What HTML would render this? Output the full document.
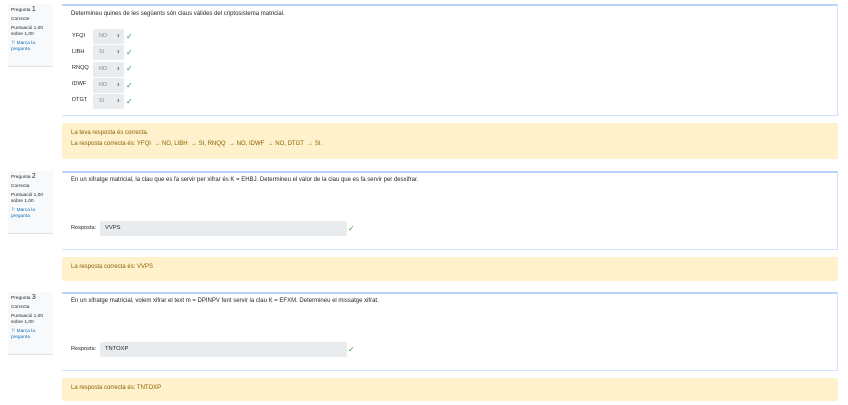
<!DOCTYPE html>
<html><head><style>
*{box-sizing:border-box;margin:0;padding:0}
body{width:848px;height:405px;background:#fff;font-family:"Liberation Sans",sans-serif;color:#1d2125;position:relative;overflow:hidden;font-size:6px}
.a{position:absolute}
.info{position:absolute;left:8px;width:45px;background:#f8f9fa;border-bottom:1px solid #dee2e6;padding:3px 3px;font-size:4.8px;line-height:6px}
.info b{font-weight:normal;font-size:7px}
.info .l{color:#0f6cbf}
.box{position:absolute;left:62px;width:776px;border:1px solid #cfe2ff;border-left:none;border-top:2px solid #b6d4fe}
.fb{position:absolute;left:62px;width:776px;background:#fff1cc;color:#8a6100;border-radius:2px;padding-left:9px}
.sel{position:absolute;left:93px;width:31px;height:15px;background:#e9ecef;border-radius:2px;color:#888;font-size:5.4px;padding:4px 0 0 6px}
.sel:after{content:"⬍";position:absolute;right:4px;top:4px;font-size:4px;color:#666}
.lab{position:absolute;left:72px;font-size:5.6px}
.ck{position:absolute;color:#2f9e44;font-size:8px}
.inp{position:absolute;left:100px;width:247px;height:15px;background:#e9ecef;border-radius:2px;padding:4px 0 0 5px;font-size:5.8px}
</style></head><body>
<div class="info" style="top:4px;height:63px"><div>Pregunta <b>1</b></div><div style="margin-top:3px">Correcte</div><div style="margin-top:3px">Puntuació 1,00 sobre 1,00</div><div class="l" style="margin-top:3px">⚐ Marca la pregunta</div></div>
<div class="box" style="top:4px;height:112px"></div>
<div class="a" style="left:71px;top:11px">Determineu quines de les següents són claus vàlides del criptosistema matricial.</div>
<div class="lab" style="top:33px">YFQI</div><div class="sel" style="top:29px">NO</div><div class="ck" style="left:126px;top:32px">✓</div>
<div class="lab" style="top:49px">LIBH</div><div class="sel" style="top:45px">SI</div><div class="ck" style="left:126px;top:48px">✓</div>
<div class="lab" style="top:65px">RNQQ</div><div class="sel" style="top:62px">NO</div><div class="ck" style="left:126px;top:64px">✓</div>
<div class="lab" style="top:81px">IDWF</div><div class="sel" style="top:78px">NO</div><div class="ck" style="left:126px;top:81px">✓</div>
<div class="lab" style="top:97px">DTGT</div><div class="sel" style="top:94px">SI</div><div class="ck" style="left:126px;top:97px">✓</div>
<div class="fb" style="top:123px;height:36px"><div style="margin-top:7px">La teva resposta és correcta.</div><div style="margin-top:5px">La resposta correcta és: YFQI &nbsp;→ NO, LIBH &nbsp;→ SI, RNQQ &nbsp;→ NO, IDWF &nbsp;→ NO, DTGT &nbsp;→ SI.</div></div>

<div class="info" style="top:171px;height:63px"><div>Pregunta <b>2</b></div><div style="margin-top:3px">Correcta</div><div style="margin-top:3px">Puntuació 1,00 sobre 1,00</div><div class="l" style="margin-top:3px">⚐ Marca la pregunta</div></div>
<div class="box" style="top:171px;height:79px"></div>
<div class="a" style="left:71px;top:177px">En un xifratge matricial, la clau que es fa servir per xifrar és K = EHBJ. Determineu el valor de la clau que es fa servir per desxifrar.</div>
<div class="lab" style="top:225px;left:71px">Resposta:</div><div class="inp" style="top:221px">VVPS</div><div class="ck" style="left:348px;top:224px">✓</div>
<div class="fb" style="top:257px;height:24px"><div style="margin-top:7px">La resposta correcta és: VVPS</div></div>

<div class="info" style="top:292px;height:63px"><div>Pregunta <b>3</b></div><div style="margin-top:3px">Correcta</div><div style="margin-top:3px">Puntuació 1,00 sobre 1,00</div><div class="l" style="margin-top:3px">⚐ Marca la pregunta</div></div>
<div class="box" style="top:292px;height:79px"></div>
<div class="a" style="left:71px;top:298px">En un xifratge matricial, volem xifrar el text m = DPINPV fent servir la clau K = EFXM. Determineu el missatge xifrat.</div>
<div class="lab" style="top:346px;left:71px">Resposta:</div><div class="inp" style="top:342px">TNTOXP</div><div class="ck" style="left:348px;top:345px">✓</div>
<div class="fb" style="top:378px;height:23px"><div style="margin-top:7px">La resposta correcta és: TNTOXP</div></div>
</body></html>
